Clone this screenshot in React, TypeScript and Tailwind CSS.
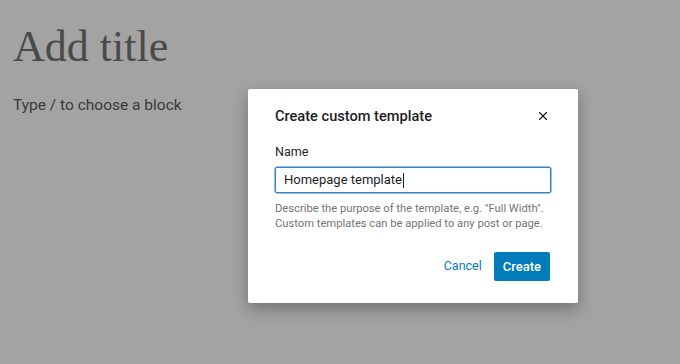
import { X } from "lucide-react";

const App = () => {
  return (
    <div className="relative h-[364px] w-[680px] overflow-hidden bg-[#a3a3a3] font-['Roboto','Noto_Sans',sans-serif]">
      <div className="px-[13px] pt-[21px]">
        <h1 className="font-['Liberation_Serif','DejaVu_Serif',serif] text-[44px] font-light leading-[52px] text-[#4a4a4a]">
          Add title
        </h1>
        <p className="mt-[22px] text-[15.5px] leading-[20px] text-[#3a3a3a]">
          Type / to choose a block
        </p>
      </div>

      <div className="absolute left-[248px] top-[89px] w-[330px] rounded-[2px] bg-white px-[27px] pb-[22px] pt-[17px] shadow-[0_6px_16px_rgba(0,0,0,0.3)]">
        <div className="flex items-center justify-between">
          <h2 className="text-[14.6px] font-medium leading-[20px] text-[#1e1e1e]">
            Create custom template
          </h2>
          <X size={14} strokeWidth={2} className="mr-[1px] text-[#1e1e1e]" />
        </div>

        <label className="mt-[18px] block text-[12.5px] leading-[16px] text-[#1e1e1e]">
          Name
        </label>
        <div className="mt-[7px] flex h-[26px] items-center rounded-[2px] border border-[#3582c4] px-[8px] shadow-[0_0_0_0.5px_#3582c4]">
          <span className="text-[13px] leading-[16px] text-[#1e1e1e]">
            Homepage template
          </span>
          <span className="ml-[1px] h-[15px] w-[1px] bg-[#1e1e1e]" />
        </div>

        <p className="mt-[8px] whitespace-nowrap text-[11.2px] leading-[15px] text-[#757575]">
          Describe the purpose of the template, e.g. "Full Width".
          <br />
          Custom templates can be applied to any post or page.
        </p>

        <div className="mt-[21px] flex items-center justify-end gap-[9px] pr-[1px]">
          <button className="h-[29px] px-[3px] text-[12.5px] text-[#007cba]">
            Cancel
          </button>
          <button className="h-[29px] rounded-[2px] bg-[#007cba] px-[9px] text-[13px] font-medium text-white">
            Create
          </button>
        </div>
      </div>
    </div>
  );
};

export default App;
